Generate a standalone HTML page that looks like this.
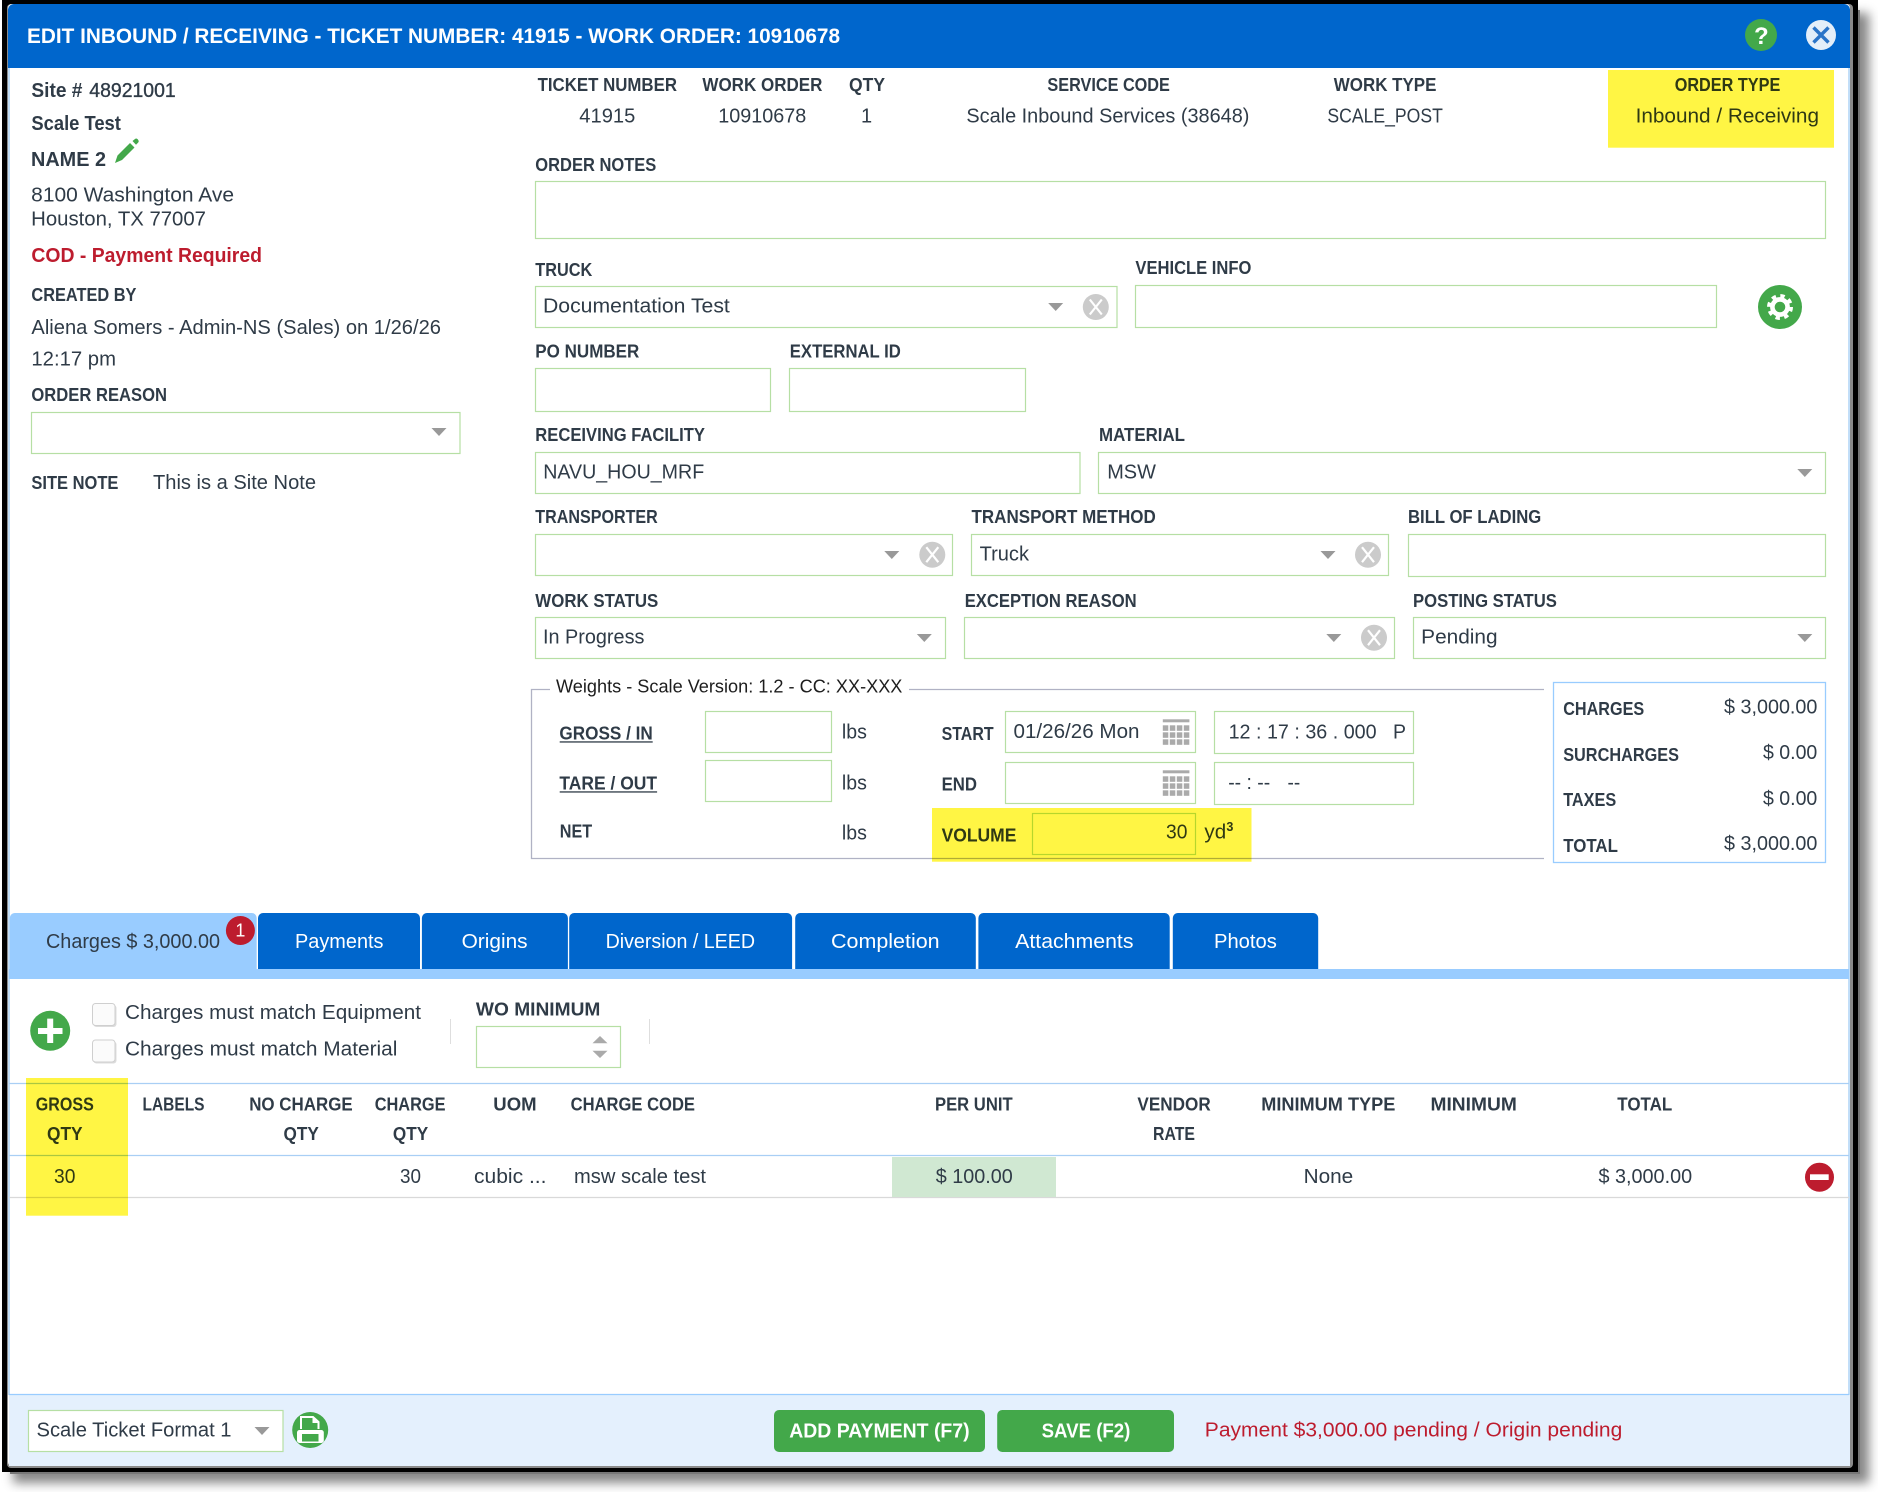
<!DOCTYPE html>
<html lang="en">
<head>
<meta charset="utf-8">
<title>Edit Inbound / Receiving</title>
<style>
html,body{margin:0;padding:0;background:#fff;width:1878px;height:1492px;overflow:hidden}
#sh{position:absolute;left:10px;top:10px;width:1850px;height:1464px;background:#777;box-shadow:6px 6px 10px 3px #888}
svg{position:absolute;left:0;top:0;display:block}
text{font-family:"Liberation Sans",Arial,sans-serif;font-size:20px;fill:#2f3b47}
.b{font-weight:700;font-size:18.5px}
.h{font-weight:700;font-size:20px}
.w{fill:#fff}
.r{fill:#bd1c2e}
.box rect{fill:none;stroke:#b6dfa4;stroke-width:1.2}
.y{fill:#fff544;mix-blend-mode:multiply}
</style>
</head>
<body>
<div id="sh"></div>
<svg width="1878" height="1492" viewBox="0 0 1878 1492" xmlns="http://www.w3.org/2000/svg">
<defs>
<path id="a" d="M-7.5-4H7.5L0 4z" fill="#999"/>
<g id="c"><circle r="13" fill="#cbcbcb"/><path d="M-6-7.5 6 7.5M6-7.5-6 7.5" stroke="#fff" stroke-width="2.2" fill="none"/></g>
<g id="cal" fill="#aaa"><rect width="26.6" height="3"/><rect y="6" width="5.5" height="5.5"/><rect x="7" y="6" width="5.5" height="5.5"/><rect x="14" y="6" width="5.5" height="5.5"/><rect x="21" y="6" width="5.5" height="5.5"/><rect y="13" width="5.5" height="5.5"/><rect x="7" y="13" width="5.5" height="5.5"/><rect x="14" y="13" width="5.5" height="5.5"/><rect x="21" y="13" width="5.5" height="5.5"/><rect y="20" width="5.5" height="5.5"/><rect x="7" y="20" width="5.5" height="5.5"/><rect x="14" y="20" width="5.5" height="5.5"/><rect x="21" y="20" width="5.5" height="5.5"/></g>
</defs>

<!-- frame -->
<rect x="2" y="0" width="1856" height="1472" fill="#000"/>
<rect x="7" y="4" width="1846" height="1464" rx="4" fill="#8a8a8a"/>
<rect x="8" y="4" width="1842" height="1462" rx="4" fill="#fff"/>
<path d="M8 68V10a6 6 0 0 1 6-6H1844a6 6 0 0 1 6 6V68z" fill="#0066cc"/>
<path d="M9 68V1395M1849 68V1395" stroke="#a9cff5" stroke-width="1.4" fill="none"/>

<!-- title -->
<text class="h w" style="font-size:21px" x="27" y="43" textLength="813" lengthAdjust="spacingAndGlyphs">EDIT INBOUND / RECEIVING - TICKET NUMBER: 41915 - WORK ORDER: 10910678</text>
<circle cx="1761" cy="35" r="16" fill="#43a84a"/>
<text class="h w" style="font-size:24px" x="1754" y="44">?</text>
<circle cx="1821" cy="35" r="15" fill="#e3eef9"/>
<path d="M1813.5 27.5 1828.5 42.5M1828.5 27.5 1813.5 42.5" stroke="#2a74c8" stroke-width="3.4" fill="none"/>

<!-- left column -->
<text class="h" x="31.4" y="97" textLength="51" lengthAdjust="spacingAndGlyphs">Site #</text>
<text x="89.3" y="97" textLength="86.4" lengthAdjust="spacingAndGlyphs" style="stroke:#2f3b47;stroke-width:.35">48921001</text>
<text class="h" x="31.4" y="130" textLength="89.5" lengthAdjust="spacingAndGlyphs">Scale Test</text>
<text class="h" x="31" y="166" textLength="75" lengthAdjust="spacingAndGlyphs">NAME 2</text>
<path d="M115 163l2.5-7.5 12.5-12.5 4.5 4.5-12.5 12.5zM132.5 141l2.5-2a2 2 0 0 1 2.7.3l.6.8a2 2 0 0 1-.3 2.6l-2 2z" fill="#43a84a"/>
<text x="31.2" y="201.3" textLength="202.8" lengthAdjust="spacingAndGlyphs">8100 Washington Ave</text>
<text x="31.2" y="225.3" textLength="174.8" lengthAdjust="spacingAndGlyphs">Houston, TX 77007</text>
<text class="h r" x="31.4" y="262" textLength="230.6" lengthAdjust="spacingAndGlyphs">COD - Payment Required</text>
<text class="b" x="31.4" y="301" textLength="105" lengthAdjust="spacingAndGlyphs">CREATED BY</text>
<text x="31.4" y="334" textLength="409.6" lengthAdjust="spacingAndGlyphs">Aliena Somers - Admin-NS (Sales) on 1/26/26</text>
<text x="31.4" y="365.3" textLength="84.6" lengthAdjust="spacingAndGlyphs">12:17 pm</text>
<text class="b" x="31.4" y="401" textLength="135.6" lengthAdjust="spacingAndGlyphs">ORDER REASON</text>
<text class="b" x="31.4" y="489" textLength="87" lengthAdjust="spacingAndGlyphs">SITE NOTE</text>
<text x="153" y="489" textLength="163" lengthAdjust="spacingAndGlyphs">This is a Site Note</text>

<!-- boxes -->
<g class="box">
<rect x="31.5" y="412.5" width="428.5" height="41"/>
<rect x="535.5" y="181.5" width="1290" height="57"/>
<rect x="535.5" y="286.5" width="581.5" height="41"/>
<rect x="1135.5" y="285.5" width="581" height="42"/>
<rect x="535.5" y="368.5" width="235" height="43"/>
<rect x="789.5" y="368.5" width="236" height="43"/>
<rect x="535.5" y="452.5" width="544.5" height="41"/>
<rect x="1098.5" y="452.5" width="727" height="41"/>
<rect x="535.5" y="534.5" width="417" height="41"/>
<rect x="971.5" y="534.5" width="417" height="41"/>
<rect x="1408.5" y="534.5" width="417" height="42"/>
<rect x="535.5" y="617.5" width="410" height="41"/>
<rect x="964.5" y="617.5" width="430" height="41"/>
<rect x="1413.5" y="617.5" width="412" height="41"/>
<rect x="705.5" y="711.5" width="126" height="41"/>
<rect x="1005.5" y="711.5" width="190" height="41"/>
<rect x="1214.5" y="711.5" width="199" height="42"/>
<rect x="705.5" y="760.5" width="126" height="41"/>
<rect x="1005.5" y="762.5" width="190" height="41"/>
<rect x="1214.5" y="762.5" width="199" height="42"/>
<rect x="1032.5" y="813.5" width="163" height="41"/>
<rect x="476.5" y="1026.5" width="144" height="41"/>
</g>

<!-- select arrows and clears -->
<use href="#a" x="439" y="432"/>
<use href="#a" x="1055.7" y="307"/><use href="#c" x="1095.8" y="307"/>
<use href="#a" x="1804.8" y="473"/>
<use href="#a" x="891.8" y="555"/><use href="#c" x="932.3" y="554.7"/>
<use href="#a" x="1328" y="555"/><use href="#c" x="1368" y="554.7"/>
<use href="#a" x="924.3" y="638"/>
<use href="#a" x="1333.8" y="638"/><use href="#c" x="1374" y="637.7"/>
<use href="#a" x="1804.8" y="638"/>

<!-- top row -->
<text class="b" x="537.6" y="91" textLength="139.4" lengthAdjust="spacingAndGlyphs">TICKET NUMBER</text>
<text class="b" x="702.4" y="91" textLength="120" lengthAdjust="spacingAndGlyphs">WORK ORDER</text>
<text class="b" x="849" y="91" textLength="36" lengthAdjust="spacingAndGlyphs">QTY</text>
<text class="b" x="1047.4" y="91" textLength="122.5" lengthAdjust="spacingAndGlyphs">SERVICE CODE</text>
<text class="b" x="1333.8" y="91" textLength="102.6" lengthAdjust="spacingAndGlyphs">WORK TYPE</text>
<text class="b" x="1674.7" y="91" textLength="105.6" lengthAdjust="spacingAndGlyphs">ORDER TYPE</text>
<text x="579.3" y="122.7" textLength="56" lengthAdjust="spacingAndGlyphs">41915</text>
<text x="718.3" y="122.7" textLength="88" lengthAdjust="spacingAndGlyphs">10910678</text>
<text x="861" y="122.7">1</text>
<text x="966.4" y="122.7" textLength="283" lengthAdjust="spacingAndGlyphs">Scale Inbound Services (38648)</text>
<text x="1327.4" y="122.7" textLength="115.5" lengthAdjust="spacingAndGlyphs">SCALE_POST</text>
<text x="1635.6" y="122.7" textLength="183.4" lengthAdjust="spacingAndGlyphs">Inbound / Receiving</text>

<!-- form labels -->
<text class="b" x="535.3" y="171" textLength="121" lengthAdjust="spacingAndGlyphs">ORDER NOTES</text>
<text class="b" x="535.3" y="276" textLength="57" lengthAdjust="spacingAndGlyphs">TRUCK</text>
<text class="b" x="1135.4" y="274" textLength="116" lengthAdjust="spacingAndGlyphs">VEHICLE INFO</text>
<text x="543" y="312.7" textLength="186.8" lengthAdjust="spacingAndGlyphs">Documentation Test</text>
<circle cx="1780" cy="307" r="22" fill="#43a84a"/>
<circle cx="1780" cy="307" r="11" fill="none" stroke="#fff" stroke-width="4" stroke-dasharray="4.3 4.34"/>
<circle cx="1780" cy="307" r="7.6" fill="none" stroke="#fff" stroke-width="4.6"/>
<text class="b" x="535.3" y="357.7" textLength="104" lengthAdjust="spacingAndGlyphs">PO NUMBER</text>
<text class="b" x="789.8" y="357.7" textLength="111" lengthAdjust="spacingAndGlyphs">EXTERNAL ID</text>
<text class="b" x="535.3" y="441" textLength="169.7" lengthAdjust="spacingAndGlyphs">RECEIVING FACILITY</text>
<text class="b" x="1099" y="441" textLength="86" lengthAdjust="spacingAndGlyphs">MATERIAL</text>
<text x="543.2" y="478.7" textLength="161" lengthAdjust="spacingAndGlyphs">NAVU_HOU_MRF</text>
<text x="1107.2" y="478.7" textLength="48.7" lengthAdjust="spacingAndGlyphs">MSW</text>
<text class="b" x="535.3" y="523" textLength="122.5" lengthAdjust="spacingAndGlyphs">TRANSPORTER</text>
<text class="b" x="971.5" y="523" textLength="184.3" lengthAdjust="spacingAndGlyphs">TRANSPORT METHOD</text>
<text class="b" x="1408" y="523" textLength="133.3" lengthAdjust="spacingAndGlyphs">BILL OF LADING</text>
<text x="979.6" y="560.7" textLength="49.4" lengthAdjust="spacingAndGlyphs">Truck</text>
<text class="b" x="535.3" y="607" textLength="123" lengthAdjust="spacingAndGlyphs">WORK STATUS</text>
<text class="b" x="964.7" y="607" textLength="172" lengthAdjust="spacingAndGlyphs">EXCEPTION REASON</text>
<text class="b" x="1413" y="607" textLength="143.9" lengthAdjust="spacingAndGlyphs">POSTING STATUS</text>
<text x="543" y="643.7" textLength="101.4" lengthAdjust="spacingAndGlyphs">In Progress</text>
<text x="1421.2" y="643.7" textLength="76.4" lengthAdjust="spacingAndGlyphs">Pending</text>

<!-- weights fieldset -->
<path d="M1544 689.5H909M550 689.5H531.5V858.5H1544" fill="none" stroke="#b0b2c4" stroke-width="1.3"/>
<text style="font-size:18.5px;fill:#1d1d1d" x="556" y="692.7" textLength="346.4" lengthAdjust="spacingAndGlyphs">Weights - Scale Version: 1.2 - CC: XX-XXX</text>
<text class="b" x="559.4" y="739.3" textLength="93.4" lengthAdjust="spacingAndGlyphs">GROSS / IN</text>
<rect x="559.7" y="741.3" width="93" height="1.3" fill="#2f3b47"/>
<text x="841.9" y="738.3" textLength="25" lengthAdjust="spacingAndGlyphs">lbs</text>
<text class="b" x="941.6" y="740" textLength="52" lengthAdjust="spacingAndGlyphs">START</text>
<text x="1013.5" y="738" textLength="126" lengthAdjust="spacingAndGlyphs">01/26/26 Mon</text>
<use href="#cal" x="1162.8" y="719.3"/>
<text x="1228.6" y="738.3" textLength="148" lengthAdjust="spacingAndGlyphs">12 : 17 : 36 . 000</text>
<text x="1393" y="738.3" textLength="13" lengthAdjust="spacingAndGlyphs">P</text>
<text class="b" x="559.4" y="789.3" textLength="97.7" lengthAdjust="spacingAndGlyphs">TARE / OUT</text>
<rect x="559.7" y="791.3" width="97.4" height="1.3" fill="#2f3b47"/>
<text x="841.9" y="789.3" textLength="25" lengthAdjust="spacingAndGlyphs">lbs</text>
<text class="b" x="941.6" y="790.7" textLength="35.4" lengthAdjust="spacingAndGlyphs">END</text>
<use href="#cal" x="1162.8" y="770.3"/>
<text x="1228.2" y="789" textLength="42" lengthAdjust="spacingAndGlyphs">-- : --</text>
<text x="1287.5" y="789" textLength="12.7" lengthAdjust="spacingAndGlyphs">--</text>
<text class="b" x="559.8" y="837.7" textLength="32.4" lengthAdjust="spacingAndGlyphs">NET</text>
<text x="841.9" y="839.3" textLength="25" lengthAdjust="spacingAndGlyphs">lbs</text>
<text class="b" x="941.6" y="841.7" textLength="74.8" lengthAdjust="spacingAndGlyphs">VOLUME</text>
<text x="1166" y="838.7" textLength="21.4" lengthAdjust="spacingAndGlyphs">30</text>
<text x="1204.4" y="838.7" textLength="21.8" lengthAdjust="spacingAndGlyphs">yd</text>
<text style="font-size:13px;font-weight:700" x="1226.4" y="831" textLength="7" lengthAdjust="spacingAndGlyphs">3</text>

<!-- summary -->
<rect x="1553.5" y="682.5" width="272" height="180" fill="none" stroke="#99ccff" stroke-width="1.3"/>
<text class="b" x="1563.2" y="715" textLength="81" lengthAdjust="spacingAndGlyphs">CHARGES</text>
<text x="1724" y="713.7" textLength="93.4" lengthAdjust="spacingAndGlyphs">$ 3,000.00</text>
<text class="b" x="1563.2" y="761" textLength="115.8" lengthAdjust="spacingAndGlyphs">SURCHARGES</text>
<text x="1763" y="759" textLength="54.3" lengthAdjust="spacingAndGlyphs">$ 0.00</text>
<text class="b" x="1563.2" y="806" textLength="53" lengthAdjust="spacingAndGlyphs">TAXES</text>
<text x="1763" y="805" textLength="54.3" lengthAdjust="spacingAndGlyphs">$ 0.00</text>
<text class="b" x="1563.2" y="852" textLength="54.7" lengthAdjust="spacingAndGlyphs">TOTAL</text>
<text x="1724" y="850" textLength="93.4" lengthAdjust="spacingAndGlyphs">$ 3,000.00</text>

<!-- tabs -->
<path d="M9.8 979V918a5 5 0 0 1 5-5H251.7a5 5 0 0 1 5 5V979z" fill="#99ccff"/>
<rect x="9" y="969" width="1840" height="10" fill="#99ccff"/>
<g fill="#0066cc">
<path d="M258 969V918a5 5 0 0 1 5-5H415a5 5 0 0 1 5 5V969z"/>
<path d="M421.9 969V918a5 5 0 0 1 5-5H562.9a5 5 0 0 1 5 5V969z"/>
<path d="M569.2 969V918a5 5 0 0 1 5-5H787.1a5 5 0 0 1 5 5V969z"/>
<path d="M795.2 969V918a5 5 0 0 1 5-5H970.8a5 5 0 0 1 5 5V969z"/>
<path d="M978.4 969V918a5 5 0 0 1 5-5H1164.7a5 5 0 0 1 5 5V969z"/>
<path d="M1172.8 969V918a5 5 0 0 1 5-5H1313.2a5 5 0 0 1 5 5V969z"/>
</g>
<text x="46" y="948" textLength="174" lengthAdjust="spacingAndGlyphs">Charges $ 3,000.00</text>
<circle cx="240.4" cy="930.5" r="14.5" fill="#bd1c2e"/>
<text class="w" style="font-size:18px" x="235.4" y="936.5">1</text>
<text class="w" x="295" y="948" textLength="88.5" lengthAdjust="spacingAndGlyphs">Payments</text>
<text class="w" x="461.6" y="948" textLength="66" lengthAdjust="spacingAndGlyphs">Origins</text>
<text class="w" x="605.6" y="948" textLength="149.4" lengthAdjust="spacingAndGlyphs">Diversion / LEED</text>
<text class="w" x="831" y="948" textLength="108.6" lengthAdjust="spacingAndGlyphs">Completion</text>
<text class="w" x="1015.2" y="948" textLength="118.3" lengthAdjust="spacingAndGlyphs">Attachments</text>
<text class="w" x="1214" y="948" textLength="62.8" lengthAdjust="spacingAndGlyphs">Photos</text>

<!-- charges toolbar -->
<circle cx="50.2" cy="1030.8" r="20" fill="#43a84a"/>
<path d="M38 1028H47.2V1018.6H53.2V1028H62.5V1034H53.2V1043H47.2V1034H38z" fill="#fff"/>
<rect x="93.5" y="1005" width="23" height="22" rx="3" fill="#dcdcdc"/>
<rect x="92.5" y="1003.5" width="22.5" height="22" rx="3" fill="#fbfbfb" stroke="#cfcfcf"/>
<rect x="93.5" y="1041.5" width="23" height="22" rx="3" fill="#dcdcdc"/>
<rect x="92.5" y="1040" width="22.5" height="22" rx="3" fill="#fbfbfb" stroke="#cfcfcf"/>
<text x="125" y="1019" textLength="296" lengthAdjust="spacingAndGlyphs">Charges must match Equipment</text>
<text x="125" y="1055.7" textLength="272.4" lengthAdjust="spacingAndGlyphs">Charges must match Material</text>
<path d="M450.5 1019V1044M649.5 1019V1044" stroke="#dedede" fill="none"/>
<text class="b" x="475.9" y="1015.3" textLength="124.5" lengthAdjust="spacingAndGlyphs">WO MINIMUM</text>
<path d="M592.5 1043.3 600 1036 607.5 1043.3zM592.5 1050.7H607.5L600 1058z" fill="#aaa"/>

<!-- table -->
<path d="M9 1083.5H1849M9 1155.5H1849" stroke="#a9cff5" stroke-width="1.3" fill="none"/>
<path d="M9 1197.5H1849" stroke="#d9d9d9" stroke-width="1.3" fill="none"/>
<rect x="892" y="1157" width="164" height="40" fill="#d0e8d2"/>
<text class="b" x="35.8" y="1110.7" textLength="58" lengthAdjust="spacingAndGlyphs">GROSS</text>
<text class="b" x="47" y="1140" textLength="35.6" lengthAdjust="spacingAndGlyphs">QTY</text>
<text class="b" x="142.5" y="1110.7" textLength="62" lengthAdjust="spacingAndGlyphs">LABELS</text>
<text class="b" x="249.2" y="1110.7" textLength="103.5" lengthAdjust="spacingAndGlyphs">NO CHARGE</text>
<text class="b" x="283.5" y="1140" textLength="35.3" lengthAdjust="spacingAndGlyphs">QTY</text>
<text class="b" x="374.7" y="1110.7" textLength="70.8" lengthAdjust="spacingAndGlyphs">CHARGE</text>
<text class="b" x="392.9" y="1140" textLength="35.3" lengthAdjust="spacingAndGlyphs">QTY</text>
<text class="b" x="493.3" y="1110.7" textLength="43.3" lengthAdjust="spacingAndGlyphs">UOM</text>
<text class="b" x="570.6" y="1110.7" textLength="124.4" lengthAdjust="spacingAndGlyphs">CHARGE CODE</text>
<text class="b" x="935" y="1110.7" textLength="77.6" lengthAdjust="spacingAndGlyphs">PER UNIT</text>
<text class="b" x="1137.4" y="1110.7" textLength="73.3" lengthAdjust="spacingAndGlyphs">VENDOR</text>
<text class="b" x="1153" y="1140" textLength="42" lengthAdjust="spacingAndGlyphs">RATE</text>
<text class="b" x="1261.2" y="1110.7" textLength="134.2" lengthAdjust="spacingAndGlyphs">MINIMUM TYPE</text>
<text class="b" x="1430.5" y="1110.7" textLength="86.3" lengthAdjust="spacingAndGlyphs">MINIMUM</text>
<text class="b" x="1617.3" y="1110.7" textLength="55" lengthAdjust="spacingAndGlyphs">TOTAL</text>
<text x="54" y="1183" textLength="21.4" lengthAdjust="spacingAndGlyphs">30</text>
<text x="400" y="1183" textLength="21" lengthAdjust="spacingAndGlyphs">30</text>
<text x="474" y="1183" textLength="72.5" lengthAdjust="spacingAndGlyphs">cubic ...</text>
<text x="574" y="1183" textLength="132" lengthAdjust="spacingAndGlyphs">msw scale test</text>
<text x="935.8" y="1183" textLength="77" lengthAdjust="spacingAndGlyphs">$ 100.00</text>
<text x="1303.6" y="1183" textLength="49.6" lengthAdjust="spacingAndGlyphs">None</text>
<text x="1598.5" y="1183" textLength="93.6" lengthAdjust="spacingAndGlyphs">$ 3,000.00</text>
<circle cx="1819.5" cy="1177.2" r="14.5" fill="#bd1c2e"/>
<rect x="1810" y="1174.3" width="18.7" height="5.7" fill="#fff"/>

<!-- footer -->
<rect x="9" y="1395" width="1841" height="71" fill="#e4f0fd"/>
<path d="M9 1394.5H1849" stroke="#99ccff" stroke-width="1.3" fill="none"/>
<rect x="28.5" y="1410.5" width="254.5" height="41" fill="#fff" stroke="#b6dfa4" stroke-width="1.2"/>
<text x="36.5" y="1436.7" textLength="195" lengthAdjust="spacingAndGlyphs">Scale Ticket Format 1</text>
<use href="#a" x="262" y="1431"/>
<circle cx="310.2" cy="1430" r="18" fill="#43a84a"/>
<path d="M301 1429V1417H313L318.5 1422V1429" fill="#43a84a" stroke="#fff" stroke-width="2"/>
<path d="M312.5 1417V1423H318.5z" fill="#fff"/>
<rect x="297" y="1430" width="26.8" height="13" rx="2.5" fill="#fff"/>
<rect x="302" y="1434" width="16.5" height="7.5" fill="#43a84a"/>
<rect x="774" y="1410" width="211" height="42" rx="5" fill="#43a84a"/>
<rect x="997.2" y="1410" width="176.8" height="42" rx="5" fill="#43a84a"/>
<text class="h w" x="789.2" y="1437.7" textLength="180.4" lengthAdjust="spacingAndGlyphs">ADD PAYMENT (F7)</text>
<text class="h w" x="1041.6" y="1437.7" textLength="88.8" lengthAdjust="spacingAndGlyphs">SAVE (F2)</text>
<text class="r" x="1204.8" y="1436.7" textLength="417.5" lengthAdjust="spacingAndGlyphs">Payment $3,000.00 pending / Origin pending</text>

<!-- highlights -->
<rect class="y" x="1608" y="70" width="226" height="77.7"/>
<rect class="y" x="932" y="808" width="319.5" height="53.7"/>
<rect class="y" x="26" y="1078" width="102" height="137.7"/>
</svg>
</body>
</html>
